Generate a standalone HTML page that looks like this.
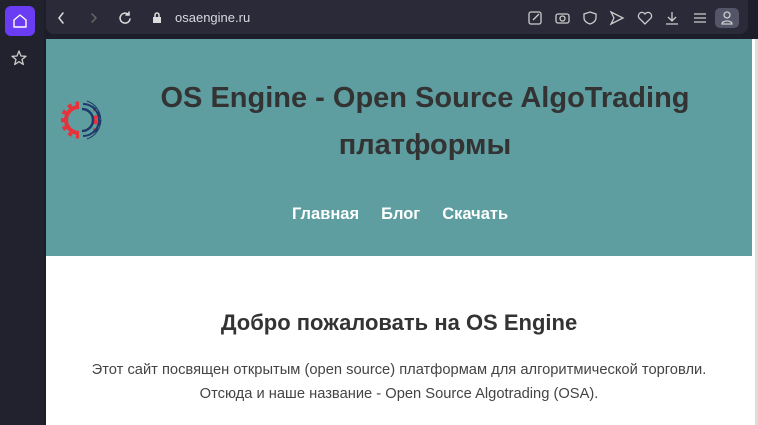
<!DOCTYPE html>
<html><head><meta charset="utf-8"><style>
*{margin:0;padding:0;box-sizing:border-box}
body{width:758px;height:425px;overflow:hidden;background:#1e1d2a;font-family:"Liberation Sans",sans-serif;position:relative}
.side{position:absolute;left:0;top:0;width:44px;height:425px;background:#22212e}
.home{position:absolute;left:5px;top:6px;width:30px;height:30px;border-radius:6px;background:#6a3df5}
.bar{position:absolute;left:46px;top:0;width:702px;height:34px;background:#2b2a39;border-radius:0 0 8px 8px}
.url{position:absolute;left:175px;top:10px;color:#d8d8e0;font-size:13px}
.page{position:absolute;left:46px;top:39px;width:712px;height:386px;background:#fff}
.hdr{position:absolute;left:0;top:0;width:706px;height:217px;background:#5f9ea0}
.scroll{position:absolute;right:0;top:0;width:3px;height:386px;background:#ddd}
h1{position:absolute;left:0;width:706px;text-align:center;color:#333;font-size:29px;font-weight:bold}
.nav{position:absolute;top:166px;left:246px;color:#fff;font-weight:bold;font-size:16.5px}
.nav span{margin-right:22px}
h2{position:absolute;top:271px;left:0;width:706px;text-align:center;font-size:22px;color:#333;font-weight:bold}
p{position:absolute;left:0;width:706px;text-align:center;font-size:14.7px;color:#444}
svg{position:absolute}
</style></head><body>
<div class="side"><div class="home"></div>
<svg style="left:11px;top:12px" width="18" height="18" viewBox="0 0 18 18" fill="none" stroke="#fff" stroke-width="1.4"><path d="M3 8L9 3L15 8V15H3Z" stroke-linejoin="round"/></svg>
<svg style="left:10px;top:49px" width="18" height="18" viewBox="0 0 18 18" fill="none" stroke="#ccc" stroke-width="1.3"><path d="M9 2L11 7L16 7.3L12 10.5L13.3 15.5L9 12.7L4.7 15.5L6 10.5L2 7.3L7 7Z" stroke-linejoin="round"/></svg>
</div>
<div class="bar"></div>
<svg style="left:56px;top:10px" width="200" height="16" viewBox="0 0 200 16" fill="none" stroke-width="1.5" stroke-linecap="round"><path d="M7 3L3 8L7 13" stroke="#ddd"/><path d="M36 4L40 8L36 12" stroke="#666"/><path d="M73 5A5 5 0 1 0 74 9M73 2V5H70" stroke="#ddd"/><rect x="97" y="7" width="8" height="6" fill="#ddd" stroke="none"/><path d="M99 7V5A2 2 0 0 1 103 5V7" stroke="#ddd"/></svg>
<div class="url">osaengine.ru</div>
<svg style="left:525px;top:8px" width="220" height="20" viewBox="0 0 220 20" fill="none" stroke="#ccc" stroke-width="1.3"><rect x="4" y="4" width="12" height="12" rx="2"/><path d="M8 12L14 6"/><rect x="31" y="6" width="13" height="9" rx="2"/><circle cx="37.5" cy="10.5" r="2.5"/><path d="M65 4L71 6V10C71 13 68 15 65 16C62 15 59 13 59 10V6Z"/><path d="M86 4L98 10L86 16L89 10Z"/><path d="M120 16L114 10A3.5 3.5 0 0 1 120 6A3.5 3.5 0 0 1 126 10Z"/><path d="M147 4V12M143 9L147 13L151 9M141 16H153"/><path d="M169 6H181M169 10H181M169 14H181"/><rect x="190" y="0" width="24" height="20" rx="5" fill="#55556a" stroke="none"/><circle cx="202" cy="7" r="3"/><path d="M197 16C197 12 207 12 207 16Z"/></svg>
<div class="page">
<div class="hdr">
<svg style="left:15px;top:57px" width="48" height="48" viewBox="0 0 48 48"><circle cx="18" cy="24" r="13" fill="none" stroke="#e8323a" stroke-width="4"/><circle cx="18" cy="24" r="16" fill="none" stroke="#e8323a" stroke-width="5" stroke-dasharray="4 4"/><rect x="18" y="4" width="14" height="40" fill="#5f9ea0"/><path d="M22 8A16 16 0 0 1 22 40" fill="none" stroke="#1e3a6a" stroke-width="2"/><path d="M21 13A11 11 0 0 1 21 35" fill="none" stroke="#1e3a6a" stroke-width="2.5"/><path d="M26 5A20 20 0 0 1 26 43" fill="none" stroke="#1e3a6a" stroke-width="1"/><path d="M30 10A15 15 0 0 1 30 38" fill="none" stroke="#1e3a6a" stroke-width="1.5" stroke-dasharray="6 3"/></svg>
<h1 style="top:43px;left:26px">OS Engine - Open Source AlgoTrading</h1>
<h1 style="top:90px;left:26px">платформы</h1>
<div class="nav"><span>Главная</span><span>Блог</span><span>Скачать</span></div>
</div>
<div class="scroll"></div>
<h2>Добро пожаловать на OS Engine</h2>
<p style="top:323px">Этот сайт посвящен открытым (open source) платформам для алгоритмической торговли.</p>
<p style="top:347px">Отсюда и наше название - Open Source Algotrading (OSA).</p>
</div>
</body></html>
